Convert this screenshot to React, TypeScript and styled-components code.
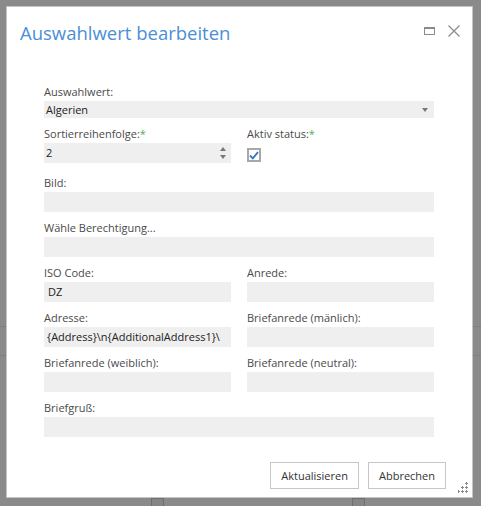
import React from 'react'
import styled, { createGlobalStyle } from 'styled-components'

const GlobalStyle = createGlobalStyle`
  html, body {
    margin: 0;
    padding: 0;
    background: #8a8a8a;
  }
  * {
    box-sizing: border-box;
  }
`

const Screen = styled.div`
  position: relative;
  width: 481px;
  height: 506px;
  overflow: hidden;
  padding: 6px 9px 9px 6px;
  font-family: 'Open Sans', 'Noto Sans', sans-serif;
`

const Backdrop = styled.div`
  position: absolute;
  inset: 0;
  pointer-events: none;
`

const BackLine = styled.div<{ $top: number }>`
  position: absolute;
  left: 0;
  right: 0;
  top: ${(p) => p.$top}px;
  height: 1px;
  background: #7e7e7e;
`

const BackBox = styled.div<{ $left: number }>`
  position: absolute;
  top: 498px;
  left: ${(p) => p.$left}px;
  width: 13px;
  height: 13px;
  border: 1px solid #6e6e6e;
  background: #858585;
`

const Dialog = styled.div`
  position: relative;
  width: 467px;
  height: 492px;
  background: #fff;
  border: 1px solid #c4c4c4;
  display: flex;
  flex-direction: column;
`

const Header = styled.div`
  display: flex;
  align-items: center;
  justify-content: space-between;
  padding: 6px 12px 0 13px;
  height: 46px;
`

const Title = styled.h1`
  margin: 0;
  font-weight: 400;
  font-size: 18.5px;
  line-height: 26px;
  color: #4a8fd6;
`

const HeaderTools = styled.div`
  display: flex;
  align-items: center;
  gap: 13px;
  margin-top: -4px;
`

const ToolButton = styled.button`
  border: 0;
  padding: 0;
  background: none;
  display: flex;
  align-items: center;
`

const Form = styled.div`
  display: flex;
  flex-direction: column;
  gap: 9px;
  padding: 32px 38px 0 37px;
`

const Row = styled.div`
  display: grid;
  grid-template-columns: 187px 187px;
  column-gap: 16px;
`

const Field = styled.div`
  display: flex;
  flex-direction: column;
`

const Label = styled.label`
  font-size: 11px;
  line-height: 14px;
  margin-bottom: 2px;
  color: #4a4a4a;
  white-space: nowrap;
`

const Required = styled.span`
  color: #4caf50;
`

const Control = styled.div<{ $h?: number; $pad?: number }>`
  position: relative;
  height: ${(p) => p.$h ?? 20}px;
  background: #efefef;
  padding: 0 ${(p) => p.$pad ?? 4}px;
  font-size: 11px;
  line-height: ${(p) => p.$h ?? 20}px;
  color: #222;
  white-space: nowrap;
  overflow: hidden;
`

const Arrow = styled.span`
  position: absolute;
  right: 6px;
  top: 7px;
  width: 0;
  height: 0;
  border-left: 3.5px solid transparent;
  border-right: 3.5px solid transparent;
  border-top: 4px solid #777;
`

const Spinner = styled.span`
  position: absolute;
  right: 5px;
  top: 4px;
  display: flex;
  flex-direction: column;
  gap: 4px;
`

const SpinUp = styled.span`
  width: 0;
  height: 0;
  border-left: 3.5px solid transparent;
  border-right: 3.5px solid transparent;
  border-bottom: 4px solid #777;
`

const SpinDown = styled.span`
  width: 0;
  height: 0;
  border-left: 3.5px solid transparent;
  border-right: 3.5px solid transparent;
  border-top: 4px solid #777;
`

const CheckArea = styled.div`
  height: 24px;
  padding-top: 5px;
`

const CheckBox = styled.span`
  display: flex;
  align-items: center;
  justify-content: center;
  width: 14px;
  height: 14px;
  border: 2px solid #a8a8a8;
  background: #fff;
`

const Footer = styled.div`
  display: flex;
  justify-content: flex-end;
  gap: 9px;
  padding: 25px 26px 0 0;
`

const Button = styled.button`
  height: 27px;
  padding: 0 10px;
  background: #fff;
  border: 1px solid #c6c6c6;
  font-family: inherit;
  font-size: 11px;
  color: #333;
`

const Grip = styled.div`
  position: absolute;
  right: 3px;
  bottom: 4px;
  display: flex;
`

function Field2({ label, value, pad }: { label: string; value?: string; pad?: number }) {
  return (
    <Field>
      <Label>{label}</Label>
      <Control $pad={pad}>{value}</Control>
    </Field>
  )
}

export default function App() {
  return (
    <>
      <GlobalStyle />
      <Screen>
        <Backdrop>
          <BackLine $top={326} />
          <BackLine $top={355} />
          <BackBox $left={151} />
          <BackBox $left={352} />
        </Backdrop>
        <Dialog>
          <Header>
            <Title>Auswahlwert bearbeiten</Title>
            <HeaderTools>
              <ToolButton aria-label="Maximieren">
                <svg width="11" height="8" viewBox="0 0 11 8">
                  <rect x="0.5" y="0.5" width="10" height="7" fill="none" stroke="#8a8a8a" />
                  <line x1="0" y1="1.5" x2="11" y2="1.5" stroke="#8a8a8a" />
                </svg>
              </ToolButton>
              <ToolButton aria-label="Schließen">
                <svg width="12" height="12" viewBox="0 0 12 12">
                  <path d="M0.5 0.5 L11.5 11.5 M11.5 0.5 L0.5 11.5" stroke="#8a8a8a" strokeWidth="1.2" />
                </svg>
              </ToolButton>
            </HeaderTools>
          </Header>
          <Form>
            <Field>
              <Label>Auswahlwert:</Label>
              <Control $h={17} $pad={2}>
                Algerien
                <Arrow />
              </Control>
            </Field>
            <Row>
              <Field>
                <Label>
                  Sortierreihenfolge:<Required>*</Required>
                </Label>
                <Control $pad={2}>
                  2
                  <Spinner>
                    <SpinUp />
                    <SpinDown />
                  </Spinner>
                </Control>
              </Field>
              <Field>
                <Label>
                  Aktiv status:<Required>*</Required>
                </Label>
                <CheckArea>
                  <CheckBox>
                    <svg width="10" height="9" viewBox="0 0 10 9">
                      <path d="M1 4.5 L3.8 7.3 L9 1.2" fill="none" stroke="#2a78d0" strokeWidth="1.8" />
                    </svg>
                  </CheckBox>
                </CheckArea>
              </Field>
            </Row>
            <Field2 label="Bild:" />
            <Field2 label="Wähle Berechtigung..." />
            <Row>
              <Field2 label="ISO Code:" value="DZ" />
              <Field2 label="Anrede:" />
            </Row>
            <Row>
              <Field2 label="Adresse:" value="{Address}\n{AdditionalAddress1}\" pad={3} />
              <Field2 label="Briefanrede (mänlich):" />
            </Row>
            <Row>
              <Field2 label="Briefanrede (weiblich):" />
              <Field2 label="Briefanrede (neutral):" />
            </Row>
            <Field2 label="Briefgruß:" />
          </Form>
          <Footer>
            <Button>Aktualisieren</Button>
            <Button>Abbrechen</Button>
          </Footer>
          <Grip>
            <svg width="11" height="11" viewBox="0 0 11 11" fill="#8a8a8a">
              <rect x="8" y="0" width="1" height="3" />
              <rect x="7" y="1" width="3" height="1" />
              <rect x="4" y="4" width="1" height="3" />
              <rect x="3" y="5" width="3" height="1" />
              <rect x="8" y="4" width="1" height="3" />
              <rect x="7" y="5" width="3" height="1" />
              <rect x="0" y="8" width="1" height="3" />
              <rect x="-1" y="9" width="3" height="1" />
              <rect x="4" y="8" width="1" height="3" />
              <rect x="3" y="9" width="3" height="1" />
              <rect x="8" y="8" width="1" height="3" />
              <rect x="7" y="9" width="3" height="1" />
            </svg>
          </Grip>
        </Dialog>
      </Screen>
    </>
  )
}
